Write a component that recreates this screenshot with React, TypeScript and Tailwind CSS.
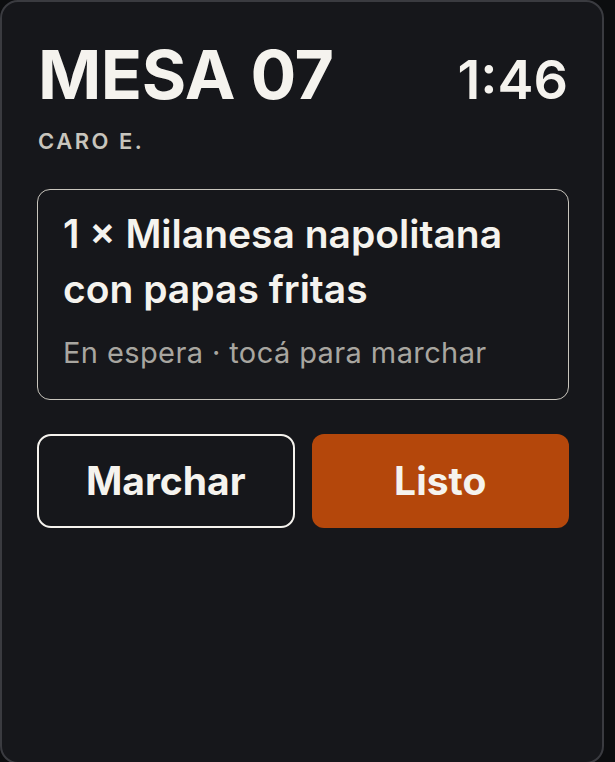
export default function App() {
  return (
    <div className="min-h-screen w-[615px] h-[762px] overflow-hidden bg-[#0c0d0f] font-['Inter','Noto_Sans',sans-serif]">
      <div className="w-[604px] h-[764px] rounded-[18px] border-2 border-[#3a3b40] bg-[#16171b] pl-[35px] pr-[33px] pt-[38px]">
        <div className="flex items-baseline justify-between pl-[1px] pr-[1px]">
          <h1 className="text-[68px] font-bold leading-none tracking-[-0.5px] text-[#f5f3ee]">MESA 07</h1>
          <span className="text-[54px] font-semibold leading-none text-[#f5f3ee]">1:46</span>
        </div>
        <div className="mt-[22px] pl-[1px] text-[22px] font-semibold leading-none tracking-[2.5px] text-[#c8c5bd]">
          CARO E.
        </div>

        <div className="mt-[37px] rounded-[13px] border-[1.5px] border-[#c8c5bd] px-[25px] pt-[16px] pb-[32px]">
          <div className="text-[39px] font-semibold leading-[55px] text-[#f5f3ee]">
            1 × Milanesa napolitana con papas fritas
          </div>
          <div className="mt-[22px] text-[29px] leading-none tracking-[0.4px] text-[#a8a6a0]">
            En espera · tocá para marchar
          </div>
        </div>

        <div className="mt-[34px] grid grid-cols-2 gap-[17px]">
          <button className="h-[94px] rounded-[14px] border-2 border-[#f5f3ee] text-[39px] font-bold text-[#f5f3ee]">
            Marchar
          </button>
          <button className="h-[94px] rounded-[12px] bg-[#b4470b] text-[39px] font-bold text-[#f5f3ee]">
            Listo
          </button>
        </div>
      </div>
    </div>
  );
}
